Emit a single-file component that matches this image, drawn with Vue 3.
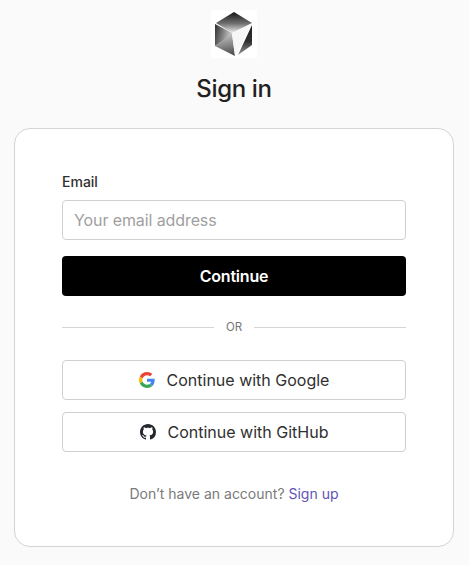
<template>
  <div class="page">
    <div class="logo">
      <svg width="46" height="48" viewBox="0 0 46 48" aria-hidden="true">
        <defs>
          <linearGradient id="left" x1="0" y1="0" x2="1" y2="0.3">
            <stop offset="0" stop-color="#2e2e2e" />
            <stop offset="1" stop-color="#c8c8c8" />
          </linearGradient>
          <linearGradient id="bottom" x1="0.5" y1="0" x2="0.7" y2="1">
            <stop offset="0" stop-color="#c4c4c4" />
            <stop offset="1" stop-color="#4a4a4a" />
          </linearGradient>
          <linearGradient id="top" x1="0" y1="0" x2="0" y2="1">
            <stop offset="0" stop-color="#161616" />
            <stop offset="0.55" stop-color="#707070" />
            <stop offset="1" stop-color="#efefef" />
          </linearGradient>
          <linearGradient id="right" x1="0" y1="0" x2="0" y2="1">
            <stop offset="0" stop-color="#1e1e1e" />
            <stop offset="0.55" stop-color="#303030" />
            <stop offset="1" stop-color="#9a9a9a" />
          </linearGradient>
        </defs>
        <rect width="46" height="48" fill="#fff" />
        <path d="M23 2 L41 13 L21 23 L5 13 Z" fill="url(#top)" />
        <path d="M4 14 L21 23 L21 25 L4 36 Z" fill="url(#left)" />
        <path d="M4 36 L21 24 L24 46 Z" fill="url(#bottom)" />
        <path d="M41 14 L21 23 L24 46 Z" fill="#f6f6f6" />
        <path d="M41 15 L41 35 L27 45 Z" fill="url(#right)" />
      </svg>
    </div>
    <h1>Sign in</h1>
    <div class="card">
      <label class="label" for="email">Email</label>
      <input id="email" class="input" type="text" placeholder="Your email address" />
      <button class="primary">Continue</button>
      <div class="divider"><span>OR</span></div>
      <button v-for="p in providers" :key="p.name" class="social">
        <svg v-if="p.name === 'Google'" width="16" height="16" viewBox="0 0 48 48" aria-hidden="true">
          <path fill="#EA4335" d="M24 9.5c3.54 0 6.71 1.22 9.21 3.6l6.85-6.85C35.9 2.38 30.47 0 24 0 14.62 0 6.51 5.38 2.56 13.22l7.98 6.19C12.43 13.72 17.74 9.5 24 9.5z" />
          <path fill="#4285F4" d="M46.98 24.55c0-1.57-.15-3.09-.38-4.55H24v9.02h12.94c-.58 2.96-2.26 5.48-4.78 7.18l7.73 6c4.51-4.18 7.09-10.36 7.09-17.65z" />
          <path fill="#FBBC05" d="M10.53 28.59c-.48-1.45-.76-2.99-.76-4.59s.27-3.14.76-4.59l-7.98-6.19C.92 16.46 0 20.12 0 24c0 3.88.92 7.54 2.56 10.78l7.97-6.19z" />
          <path fill="#34A853" d="M24 48c6.48 0 11.93-2.13 15.89-5.81l-7.73-6c-2.15 1.45-4.92 2.3-8.16 2.3-6.26 0-11.57-4.22-13.47-9.91l-7.98 6.19C6.51 42.62 14.62 48 24 48z" />
        </svg>
        <svg v-else width="16" height="16" viewBox="0 0 16 16" fill="#24292f" aria-hidden="true">
          <path d="M8 0C3.58 0 0 3.58 0 8c0 3.54 2.29 6.53 5.47 7.59.4.07.55-.17.55-.38 0-.19-.01-.82-.01-1.49-2.01.37-2.53-.49-2.69-.94-.09-.23-.48-.94-.82-1.13-.28-.15-.68-.52-.01-.53.63-.01 1.08.58 1.23.82.72 1.21 1.87.87 2.33.66.07-.52.28-.87.51-1.07-1.78-.2-3.64-.89-3.64-3.95 0-.87.31-1.59.82-2.15-.08-.2-.36-1.02.08-2.12 0 0 .67-.21 2.2.82.64-.18 1.32-.27 2-.27s1.36.09 2 .27c1.53-1.04 2.2-.82 2.2-.82.44 1.1.16 1.92.08 2.12.51.56.82 1.27.82 2.15 0 3.07-1.87 3.75-3.65 3.95.29.25.54.73.54 1.48 0 1.07-.01 1.93-.01 2.2 0 .21.15.46.55.38A8.01 8.01 0 0 0 16 8c0-4.42-3.58-8-8-8z" />
        </svg>
        <span>Continue with {{ p.name }}</span>
      </button>
      <p class="footer">Don’t have an account? <a href="#" class="link">Sign up</a></p>
    </div>
  </div>
</template>

<script setup>
const providers = [{ name: 'Google' }, { name: 'GitHub' }]
</script>

<style>
body {
  background: #fafafa;
}
</style>

<style scoped>
.page {
  height: 565px;
  box-sizing: border-box;
  padding: 10px 15px 0 14px;
  font-family: Inter, "Liberation Sans", sans-serif;
  color: #212121;
  overflow: hidden;
}
.logo {
  display: flex;
  justify-content: center;
  height: 48px;
}
h1 {
  margin: 16px 0 0;
  height: 54px;
  font-size: 24px;
  line-height: 30px;
  font-weight: 500;
  letter-spacing: -0.35px;
  text-align: center;
}
.card {
  box-sizing: border-box;
  height: 419px;
  padding: 44px 47px 0;
  background: #fff;
  border: 1px solid #d4d4d4;
  border-radius: 16px;
  display: flex;
  flex-direction: column;
}
.label {
  font-size: 14px;
  line-height: 18px;
  font-weight: 500;
  color: #303030;
  margin-bottom: 9px;
}
.input {
  box-sizing: border-box;
  height: 40px;
  width: 100%;
  padding: 0 11px;
  border: 1px solid #cfcfcf;
  border-radius: 4px;
  font: 400 16px Inter, "Liberation Sans", sans-serif;
  letter-spacing: -0.1px;
  outline: none;
}
.input::placeholder {
  color: #a0a0a0;
  opacity: 1;
}
.primary {
  height: 40px;
  margin-top: 16px;
  border: 0;
  border-radius: 4px;
  background: #000;
  color: #fff;
  font: 600 16px Inter, "Liberation Sans", sans-serif;
  letter-spacing: -0.2px;
}
.divider {
  display: flex;
  align-items: center;
  gap: 12px;
  height: 16px;
  margin: 23px 0 25px;
  font-size: 11.5px;
  color: #777;
}
.divider::before,
.divider::after {
  content: "";
  flex: 1;
  height: 1px;
  background: #d4d4d4;
}
.social {
  height: 40px;
  margin-bottom: 12px;
  display: flex;
  align-items: center;
  justify-content: center;
  gap: 12px;
  background: #fff;
  border: 1px solid #cfcfcf;
  border-radius: 4px;
  color: #303030;
  font: 400 16px Inter, "Liberation Sans", sans-serif;
}
.footer {
  margin: 20px 0 0;
  font-size: 14px;
  line-height: 20px;
  text-align: center;
  color: #7a7a7a;
}
.link {
  color: #5f53b8;
  text-decoration: none;
}
</style>
